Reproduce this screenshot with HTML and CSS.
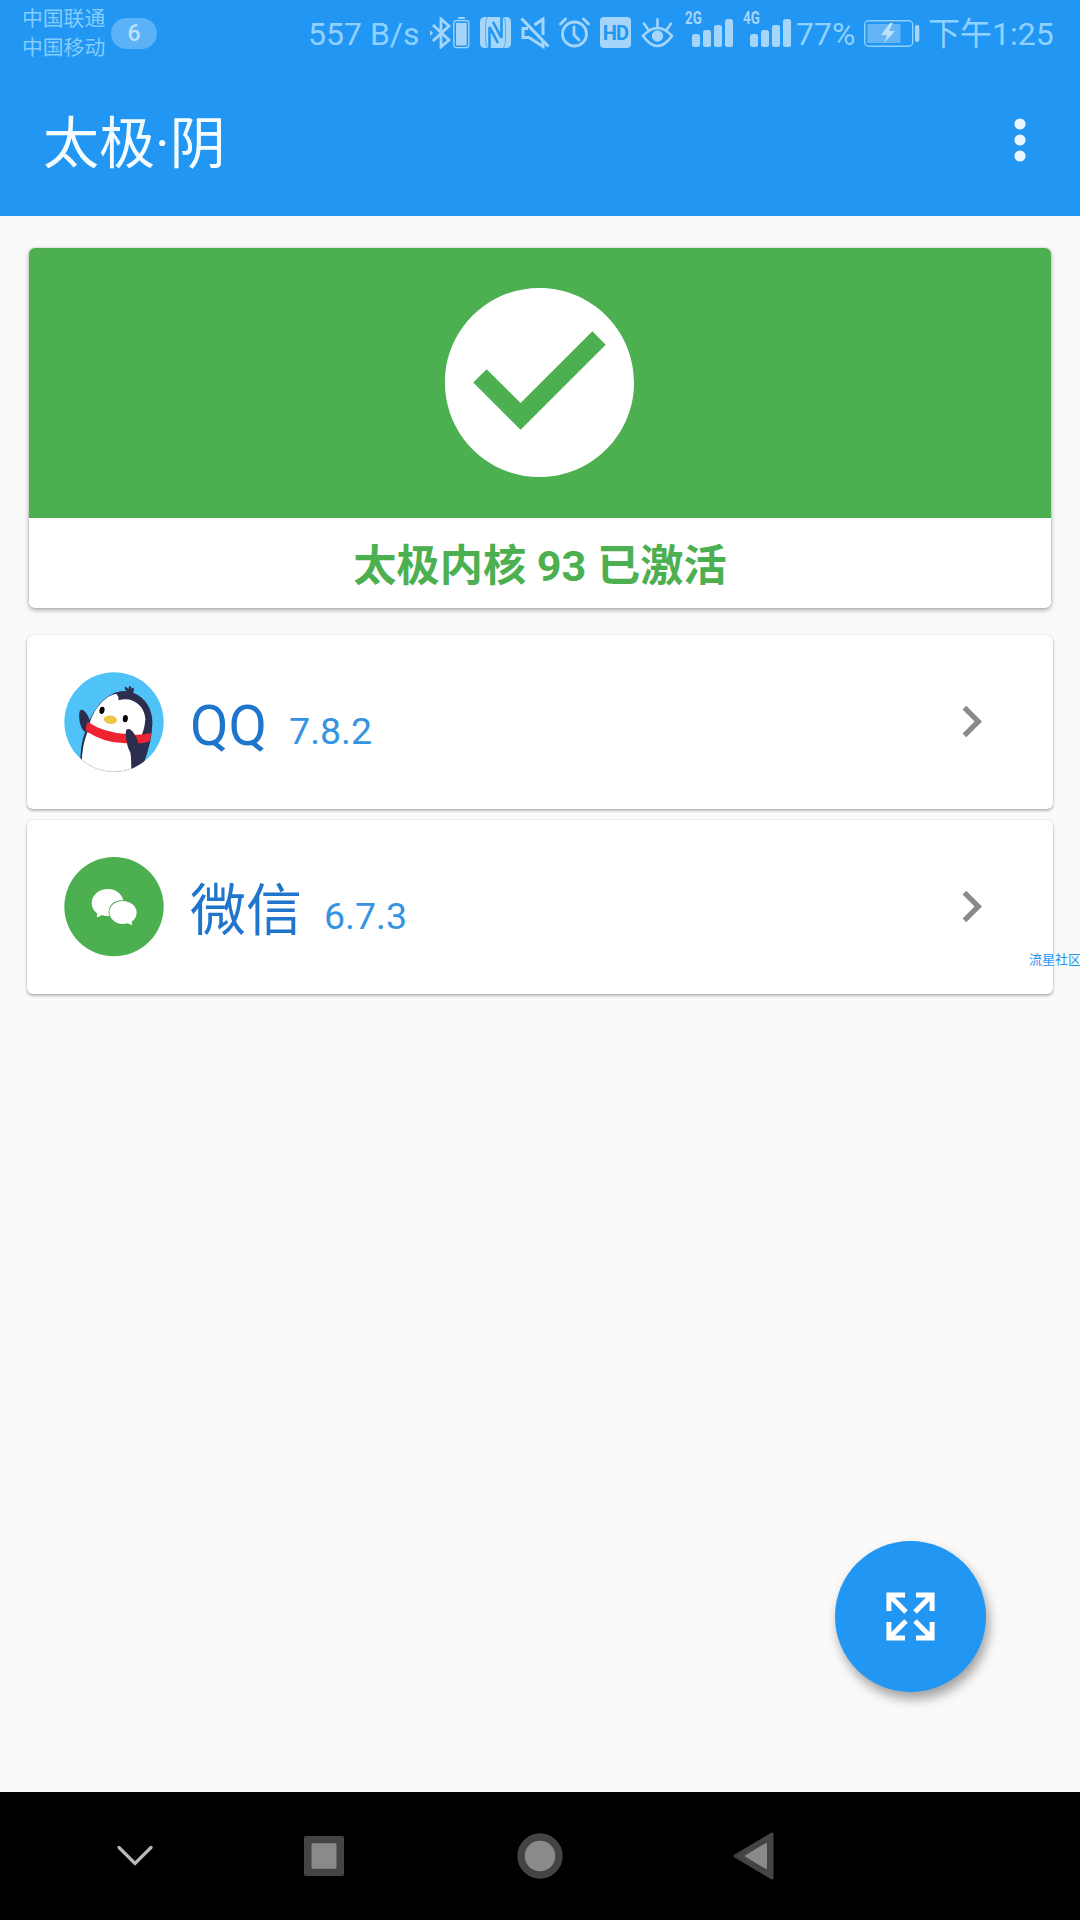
FILE: index.html
```html
<!DOCTYPE html>
<html lang="zh-CN">
<head>
<meta charset="utf-8">
<title>太极·阴</title>
<link rel="stylesheet" href="styles.css">
</head>
<body>
<div class="screen">
  <header class="header">
    <div class="status">
      <div class="carriers"><span>中国联通</span><span>中国移动</span></div>
      <span class="badge">6</span>
      <span class="speed">557 B/s</span>
      <svg class="icon bluetooth" width="22" height="32" viewBox="0 0 22 32"><path d="M3 8l16 15-8 7V2l8 7L3 24" fill="none" stroke="currentColor" stroke-width="2.800"/><path d="M0 13l3 3-3 3z" fill="currentColor"/></svg>
      <svg class="icon cell" width="17" height="32" viewBox="0 0 17 32"><rect x="5" y="0" width="7" height="2" rx="1" fill="currentColor"/><rect x=".8" y="3.6" width="15" height="27" rx="2.5" fill="none" stroke="currentColor" stroke-width="1.3"/><rect x="3" y="6" width="10.6" height="22.500" fill="currentColor"/></svg>
      <svg class="icon nfc" width="31" height="31" viewBox="0 0 31 31"><rect width="31" height="31" rx="4.500" fill="currentColor"/><path d="M7.500 0Q5.500 3 5.500 8v15q0 5 2 8M23.500 0q2 3 2 8v15q0 5-2 8" fill="none" stroke="#2196f3" stroke-width="1" opacity=".6"/><path d="M9.500 31V10L18 26M21.500 0V21L13 5" fill="none" stroke="#2196f3" stroke-width="2.600"/></svg>
      <svg class="icon mute" width="31" height="32" viewBox="0 0 31 32"><path d="M1.500 1.500l27 28" stroke="currentColor" stroke-width="3.200"/><path d="M14.500 8L23 2v16M8 11.500H3v9h6l14 9V24" fill="none" stroke="currentColor" stroke-width="3"/></svg>
      <svg class="icon alarm" width="31" height="31" viewBox="0 0 31 31"><circle cx="15.500" cy="17" r="12" fill="none" stroke="currentColor" stroke-width="2.800"/><path d="M1.500 7l5-5M24.500 2l5 5M15 10v8l5 5" fill="none" stroke="currentColor" stroke-width="2.800" stroke-linecap="round"/></svg>
      <span class="hd">HD</span>
      <svg class="icon eye" width="33" height="30" viewBox="0 0 33 30"><path d="M2 18Q16.500 2 31 18 16.500 38 2 18z" fill="none" stroke="currentColor" stroke-width="2.700" stroke-linejoin="round"/><circle cx="16.500" cy="18" r="5.700" fill="currentColor"/><path d="M16.500 1.300V8M3 5.500l4 6M30 5.500l-4 6" stroke="currentColor" stroke-width="2.500" stroke-linecap="round"/></svg>
      <div class="signal"><span class="net">2G</span><svg class="bars" width="41" height="28" viewBox="0 0 41 28"><g fill="currentColor"><rect y="15" width="8" height="13" rx="2.500"/><rect x="11" y="11" width="8" height="17" rx="2.500"/><rect x="22" y="6" width="8" height="22" rx="2.500"/><rect x="33" width="8" height="28" rx="2.500"/></g></svg></div>
      <div class="signal second"><span class="net">4G</span><svg class="bars" width="41" height="28" viewBox="0 0 41 28"><g fill="currentColor"><rect y="15" width="8" height="13" rx="2.500"/><rect x="11" y="11" width="8" height="17" rx="2.500"/><rect x="22" y="6" width="8" height="22" rx="2.500"/><rect x="33" width="8" height="28" rx="2.500"/></g></svg></div>
      <span class="percent">77%</span>
      <svg class="icon battery" width="56" height="27" viewBox="0 0 56 27"><rect x=".7" y=".7" width="48" height="25.600" rx="4" fill="none" stroke="#90d2ff" stroke-width="1.400"/><rect x="3.500" y="4" width="33" height="19" fill="#64b5f8"/><rect x="51" y="5" width="4.300" height="17" rx="2" fill="currentColor"/><path d="M26 3l-9 12h6l-3 8 11-12h-6l4-8z" fill="#bfe1fc"/></svg>
      <span class="time">下午1:25</span>
    </div>
    <div class="toolbar">
      <h1 class="title">太极·阴</h1>
      <svg width="12" height="44" viewBox="0 0 12 44"><g fill="#e8f5fe"><circle cx="6" cy="6" r="5.600"/><circle cx="6" cy="22" r="5.600"/><circle cx="6" cy="38" r="5.600"/></g></svg>
    </div>
  </header>

  <main class="content">
    <section class="state">
      <div class="state-top">
        <svg width="227" height="227" viewBox="0 0 24 24"><path fill="#fff" d="M12 2C6.480 2 2 6.480 2 12s4.480 10 10 10 10-4.480 10-10S17.520 2 12 2zm-2 15l-5-5 1.410-1.410L10 14.170l7.590-7.590L19 8l-9 9z"/></svg>
      </div>
      <div class="state-text">太极内核 93 已激活</div>
    </section>

    <section class="app">
      <svg class="avatar" width="100" height="100" viewBox="42 34 300 300">
        <defs><clipPath id="round"><circle cx="192" cy="184" r="149"/></clipPath></defs>
        <circle cx="192" cy="184" r="149" fill="#4fc3f7"/>
        <g clip-path="url(#round)">
          <path d="M92 340C90 300 90 250 106 214C92 206 84 174 89 152Q92 144 100 149Q112 158 119 178C140 130 175 98 206 93Q217 89 229 92L223 81Q228 76 235 86L238 76Q244 74 245 84Q252 78 252 86L250 96C290 112 309 150 307 190Q306 216 301 242Q293 275 284 300L276 340Z" fill="#2c2e50"/>
          <path d="M96 340C93 290 98 250 112 215L240 245L246 340Z" fill="#fff"/>
          <path d="M118 192C128 148 168 101 200 100Q206 107 206 119C244 106 284 132 286 175Q284 205 274 225Q195 238 118 192Z" fill="#fff"/>
          <path d="M114 184Q160 216 230 220Q270 225 303 217L300 241Q286 249 266 247L263 253Q250 252 242 247Q170 253 108 211Q106 196 114 184Z" fill="#ee2433"/>
          <path d="M229 207Q240 201 251 217Q264 236 268 258Q284 270 278 300L244 330Q246 300 242 277Q229 257 227 216Z" fill="#2c2e50"/>
          <ellipse cx="156" cy="149" rx="7.500" ry="11" transform="rotate(12 156 149)"/>
          <ellipse cx="226" cy="174" rx="7.500" ry="11" transform="rotate(8 226 174)"/>
          <ellipse cx="181" cy="177" rx="20" ry="12.500" transform="rotate(7 181 177)" fill="#edc644"/>
        </g>
        <path d="M98 300Q140 333 192 333 218 332 244 324" fill="none" stroke="#ddd" stroke-width="2"/>
      </svg>
      <span class="name">QQ</span><span class="version">7.8.2</span>
      <svg class="chevron" width="63" height="63" viewBox="0 0 24 24"><path fill="#8a8a8a" d="M10 6L8.590 7.410 13.170 12l-4.580 4.590L10 18l6-6z"/></svg>
    </section>

    <section class="app">
      <svg class="avatar" width="100" height="100" viewBox="0 0 300 300">
        <circle cx="150" cy="149" r="149" fill="#4caf50"/>
        <path d="M132 96C105 96 83 114 83 139Q83 157 100 170L98 181Q106 180 113 174Q122 178 136 177Q131 164 136 153C143 135 160 129 178 130C174 110 154 96 132 96Z" fill="#fff"/>
        <path d="M176 132C152 132 136 148 136 166C136 184 153 201 176 201Q184 201 191 199Q197 203 205 204L203 194Q218 184 218 166C218 147 199 132 176 132Z" fill="#fff"/>
      </svg>
      <span class="name">微信</span><span class="version">6.7.3</span>
      <svg class="chevron" width="63" height="63" viewBox="0 0 24 24"><path fill="#8a8a8a" d="M10 6L8.590 7.410 13.170 12l-4.580 4.590L10 18l6-6z"/></svg>
    </section>
  </main>

  <div class="watermark">流星社区</div>

  <div class="fab">
    <svg width="50" height="50" viewBox="0 0 50 50"><g fill="none" stroke="#fff" stroke-width="5"><path d="M2.900 19V2.900H19M4 4l16 16"/><path d="M46.100 19V2.900H30M45 4L29 20"/><path d="M2.900 30v16.100H19M4 45l16-16"/><path d="M46.100 30v16.100H30M45 45L29 29"/></g></svg>
  </div>

  <nav class="nav">
    <svg class="hide" width="36" height="22" viewBox="0 0 36 22"><path d="M2 2.500l16 16 16-16" fill="none" stroke="#b8b8b8" stroke-width="3.200" stroke-linecap="round"/></svg>
    <svg class="recent" width="40" height="40" viewBox="0 0 40 40"><rect width="40" height="40" rx="2" fill="#444"/><rect x="7.500" y="7.200" width="25" height="25.600" rx="1" fill="#8a8a8a"/></svg>
    <svg class="home" width="46" height="46" viewBox="0 0 46 46"><circle cx="23" cy="23" r="22.700" fill="#444"/><circle cx="23" cy="23" r="15.300" fill="#8a8a8a"/></svg>
    <svg class="back" width="41" height="48" viewBox="0 0 41 48"><path d="M39 2v44L2 24z" fill="#444" stroke="#444" stroke-width="3" stroke-linejoin="round"/><path d="M33 12v24L13 24z" fill="#8a8a8a" stroke="#8a8a8a" stroke-width="2" stroke-linejoin="round"/></svg>
  </nav>
</div>
</body>
</html>
```
FILE: styles.css
```css
* { box-sizing: border-box; }
body { margin: 0; font-family: Roboto, "Noto Sans CJK SC", sans-serif; }
svg { display: block; flex: none; }

.screen { position: relative; display: flex; flex-direction: column; width: 1080px; height: 1920px; overflow: hidden; background: #fafafa; }

.header { height: 216px; background: #2196f3; }
.status { display: flex; align-items: flex-start; height: 66px; padding-left: 22px; color: #a6d5fa; white-space: nowrap; }
.status > * { flex: none; }
.carriers { display: flex; flex-direction: column; width: 89px; padding-top: 5px; font-size: 20.8px; line-height: 28.5px; color: #84ccfd; }
.badge { width: 46px; height: 31px; margin-top: 18px; border-radius: 16px; background: #5cb2f7; text-align: center; font-size: 23px; font-weight: 500; line-height: 31px; color: #bce1fc; }
.speed { width: 122px; margin: 14px 0 0 151px; font-size: 32px; line-height: 40px; color: #90d2ff; }
.icon { margin-top: 17px; }
.cell { margin-left: 1px; }
.nfc { margin-left: 10px; }
.mute { margin-left: 9px; }
.alarm { margin-left: 8px; }
.hd { width: 31px; height: 31px; margin: 17px 0 0 10px; border-radius: 4px; background: #a6d5fa; color: #2196f3; text-align: center; font-size: 20px; font-weight: 700; line-height: 32px; letter-spacing: -.8px; }
.eye { margin: 18px 0 0 10px; }
.signal { display: flex; width: 58px; margin-left: 11px; }
.second { width: 53px; margin-left: 0; }
.net { width: 7px; padding-top: 8px; font-size: 18px; font-weight: 700; line-height: 19px; white-space: nowrap; transform: scaleX(.74); transform-origin: left; }
.bars { margin-top: 19px; }
.percent { width: 68px; margin-top: 14px; font-size: 32px; line-height: 40px; color: #90d2ff; }
.battery { margin-top: 20px; }
.time { margin: 14px 0 0 8px; font-size: 32px; line-height: 40px; color: #90d2ff; }

.toolbar { display: flex; align-items: center; justify-content: space-between; height: 148px; padding: 0 54px 0 43px; }
.title { margin: 8px 0 0; font-size: 56px; font-weight: 400; line-height: 70px; color: #f4fcff; }

.content { display: flex; flex: 1; flex-direction: column; padding: 32px 27px 0; }
.state { height: 360px; margin: 0 2px 27px; border-radius: 6px; overflow: hidden; background: #fff; box-shadow: 0 2px 5px rgba(0,0,0,.32), 0 0 2px rgba(0,0,0,.15); }
.state-top { display: flex; align-items: center; justify-content: center; height: 270px; padding: 0 1px 1px 0; background: #4caf50; }
.state-text { padding-top: 18px; text-align: center; font-size: 43.2px; font-weight: 700; line-height: 62px; color: #4caf50; }
.app { display: flex; align-items: center; height: 174px; margin-bottom: 11px; padding: 0 50px 0 37px; border-radius: 6px; background: #fff; box-shadow: 0 2px 3px rgba(0,0,0,.25), 0 0 2px rgba(0,0,0,.18); }
.avatar, .chevron { margin-bottom: 1px; }
.name { margin: 7px 0 0 26px; font-size: 56px; line-height: 80px; color: #1f74cb; }
.version { margin: 18px auto 0 22px; font-size: 37.5px; line-height: 50px; color: #3594e2; }

.watermark { position: absolute; top: 950px; left: 1029px; font-size: 13px; line-height: 20px; color: #2196f3; white-space: nowrap; }
.fab { position: absolute; top: 1541px; left: 835px; display: flex; align-items: center; justify-content: center; width: 151px; height: 151px; border-radius: 50%; background: #2196f3; box-shadow: 3px 7px 12px rgba(0,0,0,.36); }

.nav { display: flex; align-items: center; height: 128px; padding-left: 117px; background: #000; }
.recent { margin-left: 151px; }
.home { margin-left: 173px; }
.back { margin-left: 170px; }
```
